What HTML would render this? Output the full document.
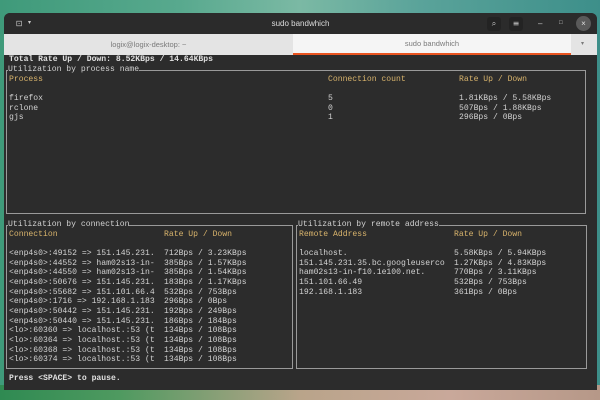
<!DOCTYPE html>
<html><head><meta charset="utf-8"><style>
*{margin:0;padding:0;box-sizing:border-box}
body{width:600px;height:400px;overflow:hidden;position:relative;font-family:"Liberation Mono",monospace;
background:linear-gradient(90deg,#3f9a7a 0%,#58a98e 30%,#7bb9a4 50%,#5aa39a 70%,#3d8f8a 100%)}
.bot{position:absolute;left:0;top:385px;width:600px;height:15px;background:linear-gradient(90deg,#2f8a52 0%,#4f9a60 20%,#b9a48a 50%,#c9a89a 75%,#b69888 100%)}
.win{position:absolute;left:4px;top:13px;width:593px;height:377px;background:#2c2c2c;border-radius:6px 6px 0 0;overflow:hidden}
.title{position:absolute;left:0;top:0;width:593px;height:21px;background:#2b2b2b;color:#dcdcdc;font-family:"Liberation Sans",sans-serif;font-size:8px;text-align:center;line-height:21px}
.tabs{position:absolute;left:0;top:21px;width:593px;height:21px;background:#e4e4e4;font-family:"Liberation Sans",sans-serif;font-size:7.5px;color:#7a7a7a}
.tab1{position:absolute;left:0;top:0;width:289px;height:21px;text-align:center;line-height:21px}
.tab2{position:absolute;left:289px;top:0;width:278px;height:21px;background:#f5f5f5;text-align:center;line-height:20px;border-bottom:2px solid #e95420}
.t{position:absolute;font-size:8.1px;line-height:9.67px;color:#d2d2d2;white-space:pre}
.y{color:#d9b46c}
.b{font-weight:bold;color:#e0e0e0}
.box{position:absolute;border:1px solid #9a9a9a}
.lab{position:absolute;background:#2c2c2c;font-size:8.1px;line-height:9.67px;color:#d2d2d2;white-space:pre}
.btn{position:absolute;top:4px;width:14px;height:14px;border-radius:3px;background:#232323;color:#ccc;font-size:8px;text-align:center;line-height:14px;font-family:"DejaVu Sans",sans-serif}
</style></head><body>
<div class="bot"></div>
<div class="win">
<div class="title">sudo bandwhich
<div class="btn" style="left:8px;background:transparent">⊡</div>
<div style="position:absolute;left:24px;top:0;font-size:6px;color:#ccc">▾</div>
<div class="btn" style="left:483px">⌕</div>
<div class="btn" style="left:505px">≡</div>
<div style="position:absolute;left:534px;top:0;color:#ccc">–</div>
<div style="position:absolute;left:555px;top:0;color:#ccc;font-size:6px">□</div>
<div style="position:absolute;left:572px;top:3px;width:15px;height:15px;border-radius:50%;background:#5a5a5a;color:#ddd;line-height:15px;font-size:8px">×</div>
</div>
<div class="tabs"><div class="tab1">logix@logix-desktop: ~</div><div class="tab2">sudo bandwhich</div>
<div style="position:absolute;left:577px;top:0;line-height:21px;font-size:6px">▾</div></div>
</div>

<div class="box" style="left:6px;top:70px;width:580px;height:144px"></div>
<div class="box" style="left:6px;top:225px;width:287px;height:144px"></div>
<div class="box" style="left:296px;top:225px;width:291px;height:144px"></div>

<div class="t b" style="left:9px;top:55.2px">Total Rate Up / Down: 8.52KBps / 14.64KBps</div>
<div class="lab" style="left:8px;top:64.9px">Utilization by process name</div>
<div class="t y" style="left:9px;top:74.5px">Process</div>
<div class="t y" style="left:328px;top:74.5px">Connection count</div>
<div class="t y" style="left:459px;top:74.5px">Rate Up / Down</div>
<div class="t" style="left:9px;top:93.9px">firefox
rclone
gjs</div>
<div class="t" style="left:328px;top:93.9px">5
0
1</div>
<div class="t" style="left:459px;top:93.9px">1.81KBps / 5.58KBps
507Bps / 1.88KBps
296Bps / 0Bps</div>

<div class="lab" style="left:8px;top:219.9px">Utilization by connection</div>
<div class="lab" style="left:298px;top:219.9px">Utilization by remote address</div>
<div class="t y" style="left:9px;top:229.5px">Connection</div>
<div class="t y" style="left:164px;top:229.5px">Rate Up / Down</div>
<div class="t y" style="left:299px;top:229.5px">Remote Address</div>
<div class="t y" style="left:454px;top:229.5px">Rate Up / Down</div>
<div class="t" style="left:9px;top:248.9px">&lt;enp4s0&gt;:49152 =&gt; 151.145.231.
&lt;enp4s0&gt;:44552 =&gt; ham02s13-in-
&lt;enp4s0&gt;:44550 =&gt; ham02s13-in-
&lt;enp4s0&gt;:50676 =&gt; 151.145.231.
&lt;enp4s0&gt;:55682 =&gt; 151.101.66.4
&lt;enp4s0&gt;:1716 =&gt; 192.168.1.183
&lt;enp4s0&gt;:50442 =&gt; 151.145.231.
&lt;enp4s0&gt;:50440 =&gt; 151.145.231.
&lt;lo&gt;:60360 =&gt; localhost.:53 (t
&lt;lo&gt;:60364 =&gt; localhost.:53 (t
&lt;lo&gt;:60368 =&gt; localhost.:53 (t
&lt;lo&gt;:60374 =&gt; localhost.:53 (t</div>
<div class="t" style="left:164px;top:248.9px">712Bps / 3.23KBps
385Bps / 1.57KBps
385Bps / 1.54KBps
183Bps / 1.17KBps
532Bps / 753Bps
296Bps / 0Bps
192Bps / 249Bps
186Bps / 184Bps
134Bps / 108Bps
134Bps / 108Bps
134Bps / 108Bps
134Bps / 108Bps</div>
<div class="t" style="left:299px;top:248.9px">localhost.
151.145.231.35.bc.googleuserco
ham02s13-in-f10.1e100.net.
151.101.66.49
192.168.1.183</div>
<div class="t" style="left:454px;top:248.9px">5.58KBps / 5.94KBps
1.27KBps / 4.83KBps
770Bps / 3.11KBps
532Bps / 753Bps
361Bps / 0Bps</div>
<div class="t b" style="left:9px;top:374.3px">Press &lt;SPACE&gt; to pause.</div>
</body></html>
